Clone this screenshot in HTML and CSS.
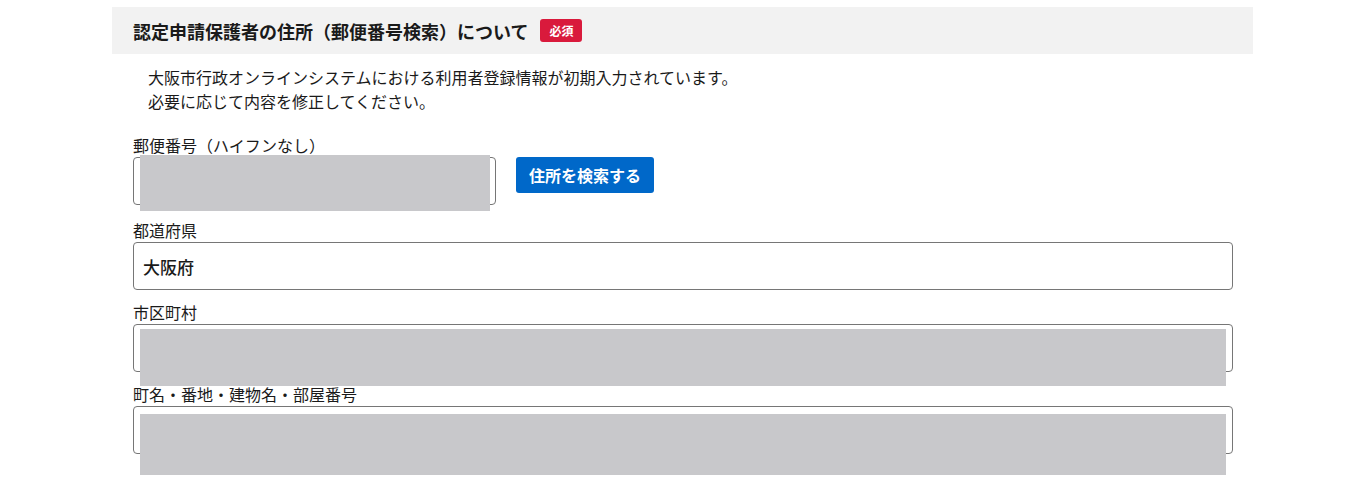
FILE: index.html
```html
<!DOCTYPE html>
<html lang="ja">
<head>
  <meta charset="UTF-8" />
  <meta name="viewport" content="width=device-width, initial-scale=1.0" />
  <title>認定申請保護者の住所</title>
  <link rel="stylesheet" href="styles.css">
</head>
<body>
  <section class="panel">
    <header class="panel-head">
      <h2>認定申請保護者の住所（郵便番号検索）について</h2>
      <span class="badge">必須</span>
    </header>

    <p class="note">大阪市行政オンラインシステムにおける利用者登録情報が初期入力されています。<br>必要に応じて内容を修正してください。</p>

    <div class="field field-zip">
      <label for="zip">郵便番号（ハイフンなし）</label>
      <div class="zip-row">
        <div class="masked">
          <input id="zip" type="text" class="input input-zip">
          <span class="redact redact-zip"></span>
        </div>
        <button type="button" class="search-btn">住所を検索する</button>
      </div>
    </div>

    <div class="field">
      <label for="pref">都道府県</label>
      <input id="pref" type="text" class="input" value="大阪府">
    </div>

    <div class="field">
      <label for="city">市区町村</label>
      <div class="masked">
        <input id="city" type="text" class="input">
        <span class="redact redact-city"></span>
      </div>
    </div>

    <div class="field">
      <label for="addr">町名・番地・建物名・部屋番号</label>
      <div class="masked">
        <input id="addr" type="text" class="input">
        <span class="redact redact-addr"></span>
      </div>
    </div>
  </section>
</body>
</html>
```

FILE: styles.css
```css
:root {
  --text: #1a1a1a;
  --head-bg: #f2f2f2;
  --badge: #d91a3c;
  --blue: #0068c9;
  --border: #767676;
  --redact: #c8c8cb;
}
body {
  margin: 0;
  font-family: "Noto Sans CJK JP", "Noto Sans", sans-serif;
  color: var(--text);
  background: #fff;
}
.panel {
  width: 1141px;
  margin: 7px 0 0 112px;
  padding-bottom: 40px;
}
.panel-head {
  display: flex;
  align-items: center;
  gap: 12px;
  height: 47px;
  padding: 0 21px;
  background: var(--head-bg);
}
.panel-head h2 {
  margin: 0;
  font-size: 18px;
  font-weight: bold;
  line-height: 1;
}
.badge {
  display: inline-flex;
  align-items: center;
  justify-content: center;
  width: 42px;
  height: 23px;
  border-radius: 3px;
  background: var(--badge);
  color: #fff;
  font-size: 12px;
  font-weight: bold;
}
.note {
  margin: 11px 0 20px;
  padding-left: 36px;
  font-size: 16px;
  line-height: 24px;
}
/* Fields */
.field {
  padding: 0 20px 0 21px;
  margin-bottom: 10px;
}
.field-zip { margin-bottom: 13px; }
.field label {
  display: block;
  font-size: 16px;
  line-height: 24px;
}
.input {
  box-sizing: border-box;
  display: block;
  width: 100%;
  height: 48px;
  margin: 0;
  padding: 0 9px;
  border: 1px solid var(--border);
  border-radius: 4px;
  font-family: inherit;
  font-size: 17px;
  font-weight: 500;
  color: var(--text);
  background: #fff;
}
.zip-row {
  display: flex;
  align-items: flex-start;
  gap: 20px;
}
.masked { position: relative; }
.input-zip { width: 363px; }
.search-btn {
  height: 36px;
  padding: 0 13px;
  border: none;
  border-radius: 3px;
  background: var(--blue);
  color: #fff;
  font-family: inherit;
  font-size: 16px;
  font-weight: bold;
  cursor: pointer;
}
/* Masked personal data */
.redact {
  position: absolute;
  left: 7px;
  background: var(--redact);
}
.redact-zip { top: -2px; width: 350px; height: 56px; }
.redact-city { top: 5px; right: 7px; height: 57px; }
.redact-addr { top: 8px; right: 7px; height: 61px; }
```
